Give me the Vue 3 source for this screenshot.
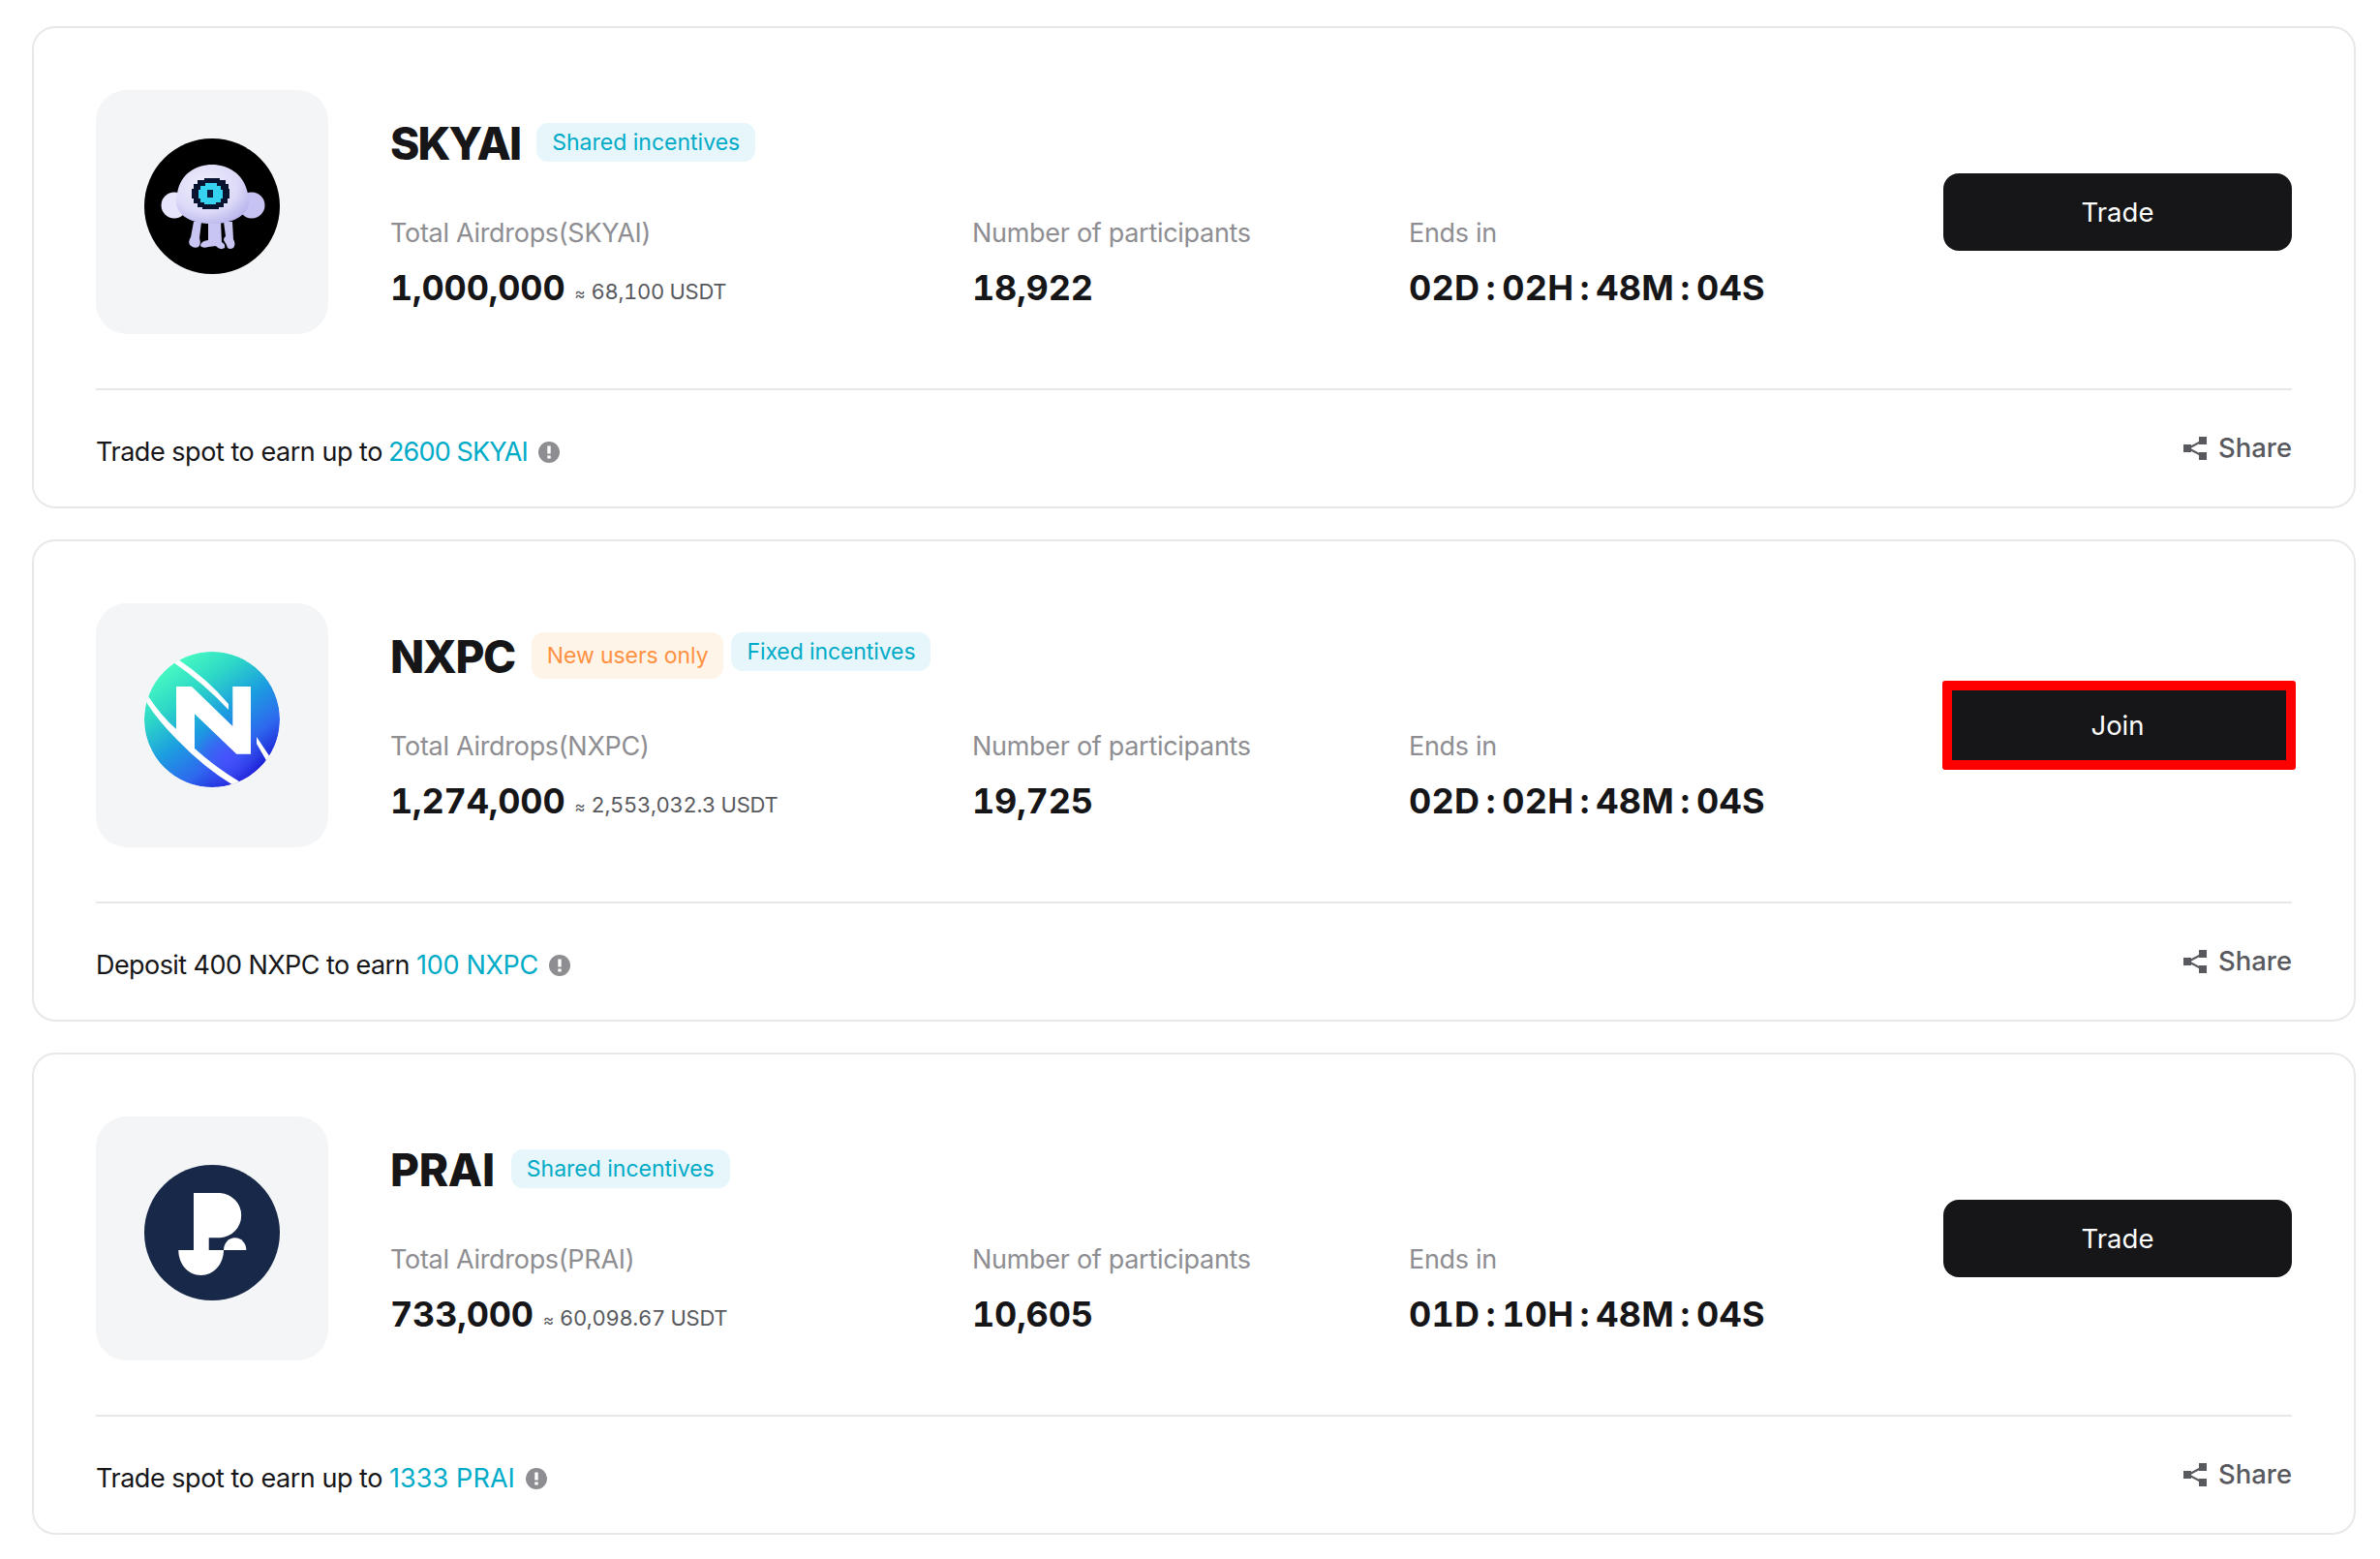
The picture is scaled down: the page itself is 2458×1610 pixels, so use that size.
<template>
    <main class="airdrop-list">
        <article v-for="item in airdrops" :key="item.token" class="card" :class="item.token.toLowerCase()">
            <section class="card-body">
                <div class="logo-box">
                    <svg v-if="item.token === 'SKYAI'" class="logo" viewBox="0 0 140 140">
                        <defs>
                            <radialGradient id="sky-body" cx="0.4" cy="0.35" r="0.75">
                                <stop offset="0" stop-color="#eeeefc" />
                                <stop offset="0.6" stop-color="#dcdaf8" />
                                <stop offset="1" stop-color="#b3aeea" />
                            </radialGradient>
                        </defs>
                        <circle cx="70" cy="70" r="70" fill="#000" />
                        <g fill="#c9c5f3">
                            <path d="M51 86h8l-2 17q2 6-1 9q-5 2-9-2q-2-4 1-8z" />
                            <path d="M66 86h13l1 21q4 2 3 6q-5 3-9-2l-8 1q-5 2-8-1q0-5 8-6z" />
                            <path d="M82 86h9l1 18q3 5 0 9q-6 3-7-3l-3-5q0-3 2-4z" />
                        </g>
                        <circle cx="31" cy="69" r="13.5" fill="#e6e5fb" />
                        <circle cx="111" cy="69" r="13.5" fill="#c6c2f2" />
                        <path d="M34 57C37 36 54 27 70 27S103 36 107 57C113 77 94 88 70 88S28 77 34 57Z" fill="url(#sky-body)" />
                        <path d="M62 41h16v2h6v4h3v5h1v10h-2v5h-4v4h-5v2H60v-2h-5v-4h-4v-5h-2V52h2v-5h4v-4h7z" fill="#07132f" />
                        <path d="M63 46h12v3h4v4h2v9h-2v4h-5v2H62v-2h-4v-4h-2v-9h2v-4h5z" fill="#36d3f0" />
                        <rect x="65" y="53" width="6" height="8" fill="#07203f" />
                    </svg>
                    <svg v-else-if="item.token === 'NXPC'" class="logo" viewBox="0 0 140 140">
                        <defs>
                            <linearGradient id="nx-base" x1="0.2" y1="0.08" x2="0.8" y2="0.94">
                                <stop offset="0" stop-color="#48fbc2" />
                                <stop offset="0.24" stop-color="#2ed9c6" />
                                <stop offset="0.5" stop-color="#1c9ee0" />
                                <stop offset="0.75" stop-color="#2e68ee" />
                                <stop offset="1" stop-color="#1a12d2" />
                            </linearGradient>
                            <radialGradient id="nx-glow" cx="0.62" cy="0.78" r="0.25">
                                <stop offset="0" stop-color="#4a50ff" stop-opacity="0.9" />
                                <stop offset="1" stop-color="#4a50ff" stop-opacity="0" />
                            </radialGradient>
                            <clipPath id="nx-clip"><circle cx="70" cy="70" r="70" /></clipPath>
                        </defs>
                        <g clip-path="url(#nx-clip)">
                            <circle cx="70" cy="70" r="70" fill="url(#nx-base)" />
                            <circle cx="70" cy="70" r="70" fill="url(#nx-glow)" />
                            <path d="M30 11L35 8Q65 28 87 54V60Q62 33 30 11Z" fill="#fff" />
                            <path d="M2 52L4 46Q18 67 33 80V36H49L91.3 77V36H110V105.7H95.3L52 64.3V100Q73 119 98 134L92 138Q62 120 34 91Q14 71 2 52Z" fill="#fff" />
                            <path d="M116 88L130 109L127 114L116 95Z" fill="#fff" />
                        </g>
                    </svg>
                    <svg v-else class="logo" viewBox="0 0 140 140">
                        <circle cx="70" cy="70" r="70" fill="#182848" />
                        <path d="M51 29H78.5A23.2 23.2 0 0 1 78.5 75.3H66.7V88H82C82 102 72 114 58.6 114C45 114 35.3 102 35.3 88H51Z" fill="#fff" />
                        <path d="M82 88A11.7 12.7 0 0 1 105.4 88Z" fill="#fff" />
                    </svg>
                </div>

                <div class="info">
                    <div class="title-row">
                        <h2 class="title">{{ item.token }}</h2>
                        <span v-for="tag in item.tags" :key="tag" class="tag" :class="{ 'tag-new': tag === 'New users only' }">{{ tag }}</span>
                    </div>
                    <div class="stats">
                        <div class="stat">
                            <p class="label">Total Airdrops({{ item.token }})</p>
                            <p class="value">
                                {{ item.total }}<span class="usdt"><span class="approx">≈</span>{{ item.usdt }} USDT</span>
                            </p>
                        </div>
                        <div class="stat">
                            <p class="label">Number of participants</p>
                            <p class="value">{{ item.participants }}</p>
                        </div>
                        <div class="stat">
                            <p class="label">Ends in</p>
                            <p class="value timer">
                                <template v-for="(part, i) in item.endsIn" :key="i">
                                    <span v-if="i" class="colon">:</span><span>{{ part }}</span>
                                </template>
                            </p>
                        </div>
                    </div>
                </div>

                <button class="action" :class="{ highlighted: item.highlighted }">{{ item.action }}</button>
            </section>

            <footer class="card-footer">
                <p class="earn">
                    {{ item.earnText }} <span class="reward">{{ item.reward }}</span>
                    <svg class="info-icon" viewBox="0 0 22 22">
                        <circle cx="11" cy="11" r="11" fill="#8e8e92" />
                        <path d="M9.3 4.5h3.4v8H9.3zM9.3 14.5h3.4v3H9.3z" fill="#fff" />
                    </svg>
                </p>
                <a class="share">
                    <svg class="share-icon" viewBox="0 0 24 24">
                        <path d="M5 12L20 4M5 12L20 20" stroke="#58595e" stroke-width="2" fill="none" />
                        <path d="M0 8h8v8H0zM16 0h8v8h-8zM16 16h8v8h-8z" fill="#58595e" />
                    </svg>
                    Share
                </a>
            </footer>
        </article>
    </main>
</template>

<script setup>
const airdrops = [
    {
        token: 'SKYAI',
        tags: ['Shared incentives'],
        total: '1,000,000',
        usdt: '68,100',
        participants: '18,922',
        endsIn: ['02D', '02H', '48M', '04S'],
        action: 'Trade',
        earnText: 'Trade spot to earn up to',
        reward: '2600 SKYAI',
    },
    {
        token: 'NXPC',
        tags: ['New users only', 'Fixed incentives'],
        total: '1,274,000',
        usdt: '2,553,032.3',
        participants: '19,725',
        endsIn: ['02D', '02H', '48M', '04S'],
        action: 'Join',
        highlighted: true,
        earnText: 'Deposit 400 NXPC to earn',
        reward: '100 NXPC',
    },
    {
        token: 'PRAI',
        tags: ['Shared incentives'],
        total: '733,000',
        usdt: '60,098.67',
        participants: '10,605',
        endsIn: ['01D', '10H', '48M', '04S'],
        action: 'Trade',
        earnText: 'Trade spot to earn up to',
        reward: '1333 PRAI',
    },
]
</script>

<style>
body {
    margin: 0;
    background: #fff;
}
</style>

<style scoped>
.airdrop-list {
    display: flex;
    flex-direction: column;
    gap: 32px;
    padding: 27px 25px 25px 33px;
    font-family: Inter, "Liberation Sans", sans-serif;
    color: #161618;
}

.card {
    box-sizing: border-box;
    height: 498px;
    padding: 64px 64px 0;
    border: 2px solid #e8e8e9;
    border-radius: 24px;
}

.card-body {
    display: flex;
    align-items: flex-start;
    height: 308px;
    border-bottom: 2px solid #e8e8e9;
}

.logo-box {
    display: flex;
    justify-content: center;
    box-sizing: border-box;
    width: 240px;
    height: 252px;
    padding-top: 50px;
    border-radius: 32px;
    background: #f3f5f7;
}

.logo {
    width: 140px;
    height: 140px;
}

.info {
    flex: 1;
    margin-left: 64px;
    padding-top: 27px;
}

.title-row {
    display: flex;
    align-items: flex-start;
    height: 56px;
}

.title {
    margin: 0 17px 0 0;
    font-size: 46px;
    font-weight: 800;
    line-height: 56px;
}

.skyai .title {
    letter-spacing: -1.9px;
}

.nxpc .title {
    letter-spacing: -1.4px;
}

.prai .title {
    letter-spacing: -0.3px;
}

.tag {
    margin: 7px 8px 0 0;
    padding: 0 16px;
    border-radius: 12px;
    background: #e6f6fa;
    color: #00abc8;
    font-size: 23px;
    line-height: 40px;
}

.nxpc .tag {
    margin-top: 3px;
    letter-spacing: -0.1px;
}

.tag-new {
    background: #fff4e8;
    color: #ff9142;
    line-height: 48px;
}

.stats {
    display: grid;
    grid-template-columns: 601px 451px 1fr;
    margin-top: 47px;
}

.label {
    margin: 0;
    color: #8e8e92;
    font-size: 27px;
    line-height: 36px;
    letter-spacing: -0.3px;
}

.value {
    margin: 16px 0 0;
    font-size: 36px;
    font-weight: 700;
    line-height: 44px;
    letter-spacing: -0.2px;
    font-variant-numeric: tabular-nums;
    white-space: nowrap;
}

.timer {
    display: flex;
    letter-spacing: 0.2px;
}

.colon {
    margin: 0 6.6px;
}

.usdt {
    margin-left: 10px;
    color: #58595e;
    font-size: 22px;
    font-weight: 400;
    letter-spacing: -0.3px;
    vertical-align: 1px;
}

.approx {
    display: inline-block;
    width: 17px;
    font-size: 17px;
}

.action {
    position: relative;
    width: 360px;
    height: 80px;
    margin-top: 86px;
    padding: 0;
    border: none;
    border-radius: 16px;
    background: #161618;
    color: #fff;
    font-family: inherit;
    font-size: 27.5px;
    line-height: 80px;
    cursor: pointer;
}

.highlighted::after {
    content: "";
    position: absolute;
    box-sizing: border-box;
    top: -6px;
    left: -1px;
    width: 365px;
    height: 92px;
    border: 10px solid #f00;
    border-radius: 3px;
}

.card-footer {
    display: flex;
    justify-content: space-between;
    align-items: flex-start;
    padding-top: 39px;
}

.earn {
    display: flex;
    align-items: center;
    margin: 5px 0 0;
    font-size: 27px;
    line-height: 40px;
    letter-spacing: -0.46px;
}

.nxpc .earn {
    letter-spacing: -0.57px;
}

.reward {
    margin-left: 7px;
    color: #00abc8;
    letter-spacing: 0.1px;
}

.skyai .reward {
    margin-left: 6px;
    letter-spacing: -0.85px;
}

.nxpc .reward {
    letter-spacing: -0.3px;
}

.info-icon {
    width: 22px;
    height: 22px;
    margin-left: 11px;
}

.share {
    display: flex;
    align-items: center;
    gap: 12px;
    color: #58595e;
    font-size: 27.4px;
    font-weight: 500;
    line-height: 40px;
}

.share-icon {
    width: 24px;
    height: 24px;
    margin-top: 2px;
}
</style>
